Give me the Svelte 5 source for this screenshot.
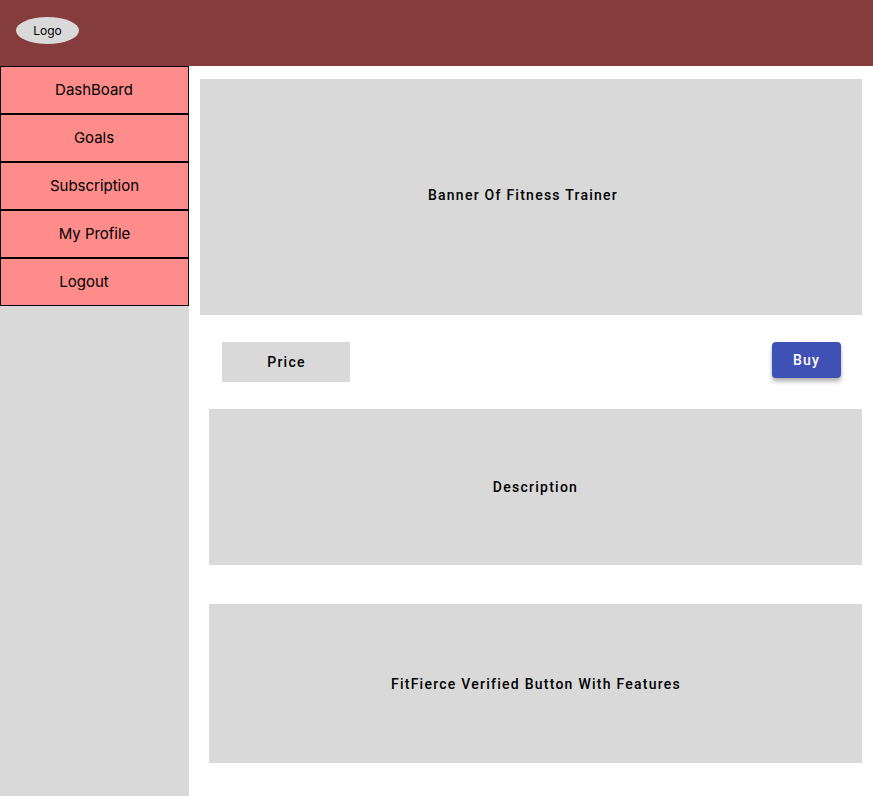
<script>
  const items = [
    { label: 'DashBoard' },
    { label: 'Goals' },
    { label: 'Subscription', wide: true },
    { label: 'My Profile', wide: true },
    { label: 'Logout', early: true }
  ];
</script>

<div class="page">
  <header><div class="logo">Logo</div></header>
  <div class="body">
    <nav>
      {#each items as item}
        <div class="item" class:wide={item.wide} class:early={item.early}>{item.label}</div>
      {/each}
    </nav>
    <main>
      <section class="banner">Banner Of Fitness Trainer</section>
      <div class="purchase">
        <div class="price">Price</div>
        <button>Buy</button>
      </div>
      <section class="description">Description</section>
      <section class="features">FitFierce Verified Button With Features</section>
    </main>
  </div>
</div>

<style>
  :global(body) { margin: 0; background: #fff; }
  .page { width: 873px; height: 796px; display: flex; flex-direction: column; overflow: hidden; color: #000; }
  header { height: 66px; flex: none; box-sizing: border-box; padding: 17px 16px; background: #843c3c; }
  .logo { width: 63px; height: 27px; border-radius: 50%; background: #d9d9d9; display: flex; align-items: center; justify-content: center; font: 12px Inter, sans-serif; }
  .body { flex: 1; display: flex; min-height: 0; }
  nav { width: 189px; flex: none; background: #d9d9d9; }
  .item { height: 48px; box-sizing: border-box; border: 1px solid #000; padding: 0 1px 2px 0; background: #fd8c8b; display: flex; align-items: center; justify-content: center; font: 15px Inter, sans-serif; letter-spacing: -0.02px; }
  .wide { padding-right: 0; }
  .early { padding-right: 21px; }
  main { flex: 1; padding: 13px 11px 0; font: 500 14px Roboto, sans-serif; letter-spacing: 1.25px; }
  section, .price { background: #d9d9d9; display: flex; align-items: center; justify-content: center; box-sizing: border-box; }
  .banner { height: 236px; padding-right: 16px; padding-bottom: 5px; }
  .purchase { display: flex; justify-content: space-between; align-items: flex-start; margin: 27px 21px 27px 22px; }
  .price { width: 128px; height: 40px; padding-left: 1px; }
  button { width: 69px; height: 36px; padding: 0; border: 0; border-radius: 4px; background: #3f51b5; color: #fff; font: inherit; letter-spacing: inherit; box-shadow: 0 4px 4px #00000040, 0 1px 3px #0000001a; }
  .description { height: 156px; margin-left: 9px; }
  .features { height: 159px; margin: 39px 0 0 9px; padding-left: 1px; }
</style>
